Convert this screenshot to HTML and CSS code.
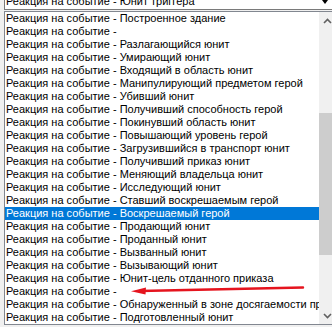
FILE: index.html
```html
<!DOCTYPE html>
<html>
<head>
  <title>Реакция на событие</title>
  <link rel="stylesheet" href="styles.css">
</head>
<body>
  <div class="combo">
    <span class="combo-text">Реакция на событие - Юнит триггера</span>
    <span class="combo-arrow"></span>
  </div>
  <div class="listbox">
    <ul class="items">
      <li>Реакция на событие - Построенное здание</li>
      <li>Реакция на событие - </li>
      <li>Реакция на событие - Разлагающийся юнит</li>
      <li>Реакция на событие - Умирающий юнит</li>
      <li>Реакция на событие - Входящий в область юнит</li>
      <li>Реакция на событие - Манипулирующий предметом герой</li>
      <li>Реакция на событие - Убивший юнит</li>
      <li>Реакция на событие - Получивший способность герой</li>
      <li>Реакция на событие - Покинувший область юнит</li>
      <li>Реакция на событие - Повышающий уровень герой</li>
      <li>Реакция на событие - Загрузившийся в транспорт юнит</li>
      <li>Реакция на событие - Получивший приказ юнит</li>
      <li>Реакция на событие - Меняющий владельца юнит</li>
      <li>Реакция на событие - Исследующий юнит</li>
      <li>Реакция на событие - Ставший воскрешаемым герой</li>
      <li class="selected">Реакция на событие - Воскрешаемый герой</li>
      <li>Реакция на событие - Продающий юнит</li>
      <li>Реакция на событие - Проданный юнит</li>
      <li>Реакция на событие - Вызванный юнит</li>
      <li>Реакция на событие - Вызывающий юнит</li>
      <li>Реакция на событие - Юнит-цель отданного приказа</li>
      <li>Реакция на событие - </li>
      <li>Реакция на событие - Обнаруженный в зоне досягаемости приближающийся юнит</li>
      <li>Реакция на событие - Подготовленный юнит</li>
    </ul>
    <div class="scrollbar">
      <div class="sb-btn">
        <svg width="9" height="6" viewBox="0 0 9 6"><polyline points="1,5 4.5,1.5 8,5" fill="none" stroke="#606060" stroke-width="1.6"/></svg>
      </div>
      <div class="sb-track">
        <div class="sb-thumb"></div>
      </div>
      <div class="sb-btn">
        <svg width="9" height="6" viewBox="0 0 9 6"><polyline points="1,1 4.5,4.5 8,1" fill="none" stroke="#606060" stroke-width="1.6"/></svg>
      </div>
    </div>
  </div>

  <!-- red annotation arrow drawn over the list -->
  <svg class="annotation" width="332" height="327" viewBox="0 0 332 327">
    <line x1="303" y1="287.5" x2="140" y2="291" stroke="#e5141e" stroke-width="2.4" stroke-linecap="round"/>
    <polygon points="131,291.3 146,287.6 145.5,294.6" fill="#e5141e"/>
  </svg>
</body>
</html>
```

FILE: styles.css
```css
body {
  margin: 0;
  width: 332px;
  height: 327px;
  overflow: hidden;
  background-color: #f0f0f0;
  font-family: "Liberation Sans", Arial, sans-serif;
  font-size: 11px;
  color: #000;
}

.combo {
  box-sizing: border-box;
  width: 333px;
  height: 18px;
  margin: -8px 0 0 4px;
  padding-left: 1px;
  border: 1px solid #7a7a7a;
  background-color: #fff;
  display: flex;
  line-height: 16px;
}

.combo-text {
  flex: 1;
  white-space: nowrap;
}

.combo-arrow {
  width: 0;
  height: 0;
  margin: 7px 8px 0 0;
  border-left: 3px solid transparent;
  border-right: 3px solid transparent;
  border-top: 4px solid #000;
}

.listbox {
  box-sizing: border-box;
  width: 333px;
  height: 314px;
  margin: 1px 0 0 4px;
  border: 1px solid #828790;
  background-color: #fff;
  display: flex;
}

.items {
  list-style: none;
  margin: 0;
  padding: 0;
  flex: 1;
  overflow: hidden;
}

.items li {
  height: 13px;
  line-height: 13px;
  padding-left: 1px;
  white-space: nowrap;
  overflow: hidden;
}

.items li.selected {
  background-color: #0078d7;
  color: #fff;
}

.scrollbar {
  width: 17px;
  display: flex;
  flex-direction: column;
  background-color: #f0f0f0;
}

.sb-btn {
  height: 17px;
  display: flex;
  align-items: center;
  justify-content: center;
}

.sb-track {
  flex: 1;
  display: flex;
  flex-direction: column;
}

.sb-thumb {
  height: 142px;
  margin-top: 84px;
  background-color: #cdcdcd;
}

.annotation {
  position: absolute;
  left: 0;
  top: 0;
  pointer-events: none;
}
```
